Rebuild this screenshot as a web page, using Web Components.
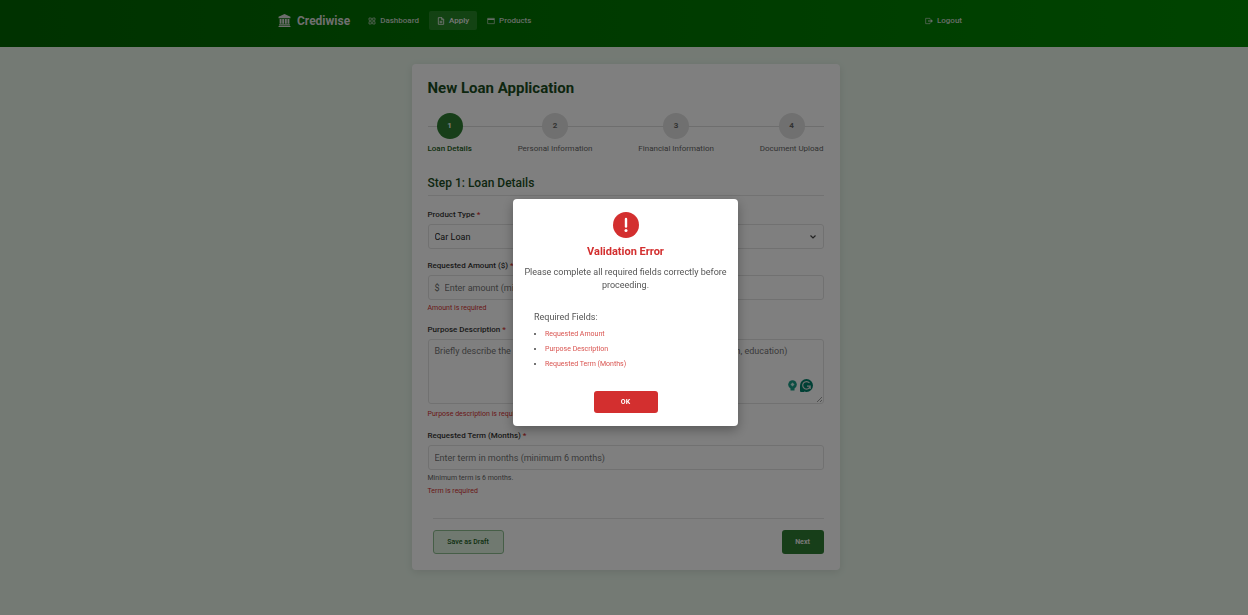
<!DOCTYPE html>
<html lang="en">
<head>
<meta charset="utf-8">
<title>Crediwise - New Loan Application</title>
<style>
html, body { margin: 0; min-height: 100%; }
body { font: 8px/12px Roboto, "Liberation Sans", sans-serif; color: #333; background: #e8f5e9; }
</style>
</head>
<body>
<loan-page></loan-page>
<error-dialog heading="Validation Error">
  <span slot="message">Please complete all required fields correctly before proceeding.</span>
  <li>Requested Amount</li>
  <li>Purpose Description</li>
  <li>Requested Term (Months)</li>
</error-dialog>
<script>
const define = (name, html) => customElements.define(name, class extends HTMLElement {
  constructor() {
    super();
    this.attachShadow({ mode: 'open' }).innerHTML =
      html.replace(/\{\{([\w-]+)\}\}/g, (_, key) => this.getAttribute(key) ?? '');
  }
});

const icons = {
  bank: '<path fill="currentColor" d="M12 0 1 5v3h22V5zM3 9h3.500v9H3zm4.800 0h3.500v9H7.800zm4.900 0h3.500v9h-3.500zm4.800 0H21v9h-3.500zM2 19h20v2H2zM1 22h22v2H1z"/>',
  grid: '<g fill="none" stroke="currentColor" stroke-width="2"><path d="M3 3h7v7H3zM14 3h7v7h-7zM3 14h7v7H3zM14 14h7v7h-7z"/></g>',
  file: '<g fill="none" stroke="currentColor" stroke-width="2.500"><path d="M4 2h11l5 5v15H4zM14 2v6h6M8 13h8M8 17h8"/></g>',
  card: '<g fill="none" stroke="currentColor" stroke-width="2"><path d="M2 4h20v16H2z"/><path stroke-width="4" d="M2 7h20"/></g>',
  logout: '<g fill="none" stroke="currentColor" stroke-width="2"><path d="M15 7V4H2v16h13v-3"/></g><path fill="currentColor" d="M9 10.500h8V6l7 6-7 6v-4.500H9z"/>'
};

customElements.define('ui-icon', class extends HTMLElement {
  constructor() {
    super();
    this.attachShadow({ mode: 'open' }).innerHTML = `
      <style>:host{display:inline-flex;width:var(--size,8px);height:var(--size,8px);flex:none}svg{width:100%;height:100%}</style>
      <svg viewBox="0 0 24 24" aria-hidden="true">${icons[this.getAttribute('name')]}</svg>`;
  }
});

customElements.define('nav-link', class extends HTMLElement {
  constructor() {
    super();
    this.attachShadow({ mode: 'open' }).innerHTML = `
      <style>
        :host{display:block}
        a{display:flex;align-items:center;gap:4px;height:19px;padding:0 8px;border-radius:2px;color:#cfdacf;font-weight:500;text-decoration:none}
        :host([active]) a{background:rgba(255,255,255,.15);color:#eee}
      </style>
      <a href="#"><ui-icon name="${this.getAttribute('icon')}"></ui-icon><slot></slot></a>`;
  }
});

define('site-header', `
  <style>
    :host{display:block;background:linear-gradient(90deg,#006400,#008800);padding-left:3px}
    .bar{display:flex;align-items:center;max-width:695px;height:47px;padding-bottom:6px;box-sizing:border-box;margin:0 auto}
    .brand{display:flex;align-items:center;gap:6px;font-size:12px;font-weight:700;color:#ddd;text-decoration:none;--size:13px;margin-right:10px}
    nav{display:flex;flex:1;gap:2px}
    .end{margin-left:auto;margin-right:3px}
  </style>
  <header class="bar">
    <a class="brand" href="#"><ui-icon name="bank"></ui-icon>Crediwise</a>
    <nav>
      <nav-link icon="grid">Dashboard</nav-link>
      <nav-link icon="file" active>Apply</nav-link>
      <nav-link icon="card">Products</nav-link>
      <nav-link class="end" icon="logout">Logout</nav-link>
    </nav>
  </header>`);

define('step-item', `
  <style>
    :host{display:flex;flex-direction:column;align-items:center;gap:4px;position:relative;color:#666}
    b{display:grid;place-items:center;width:26px;height:26px;border-radius:50%;background:#e0e0e0;color:#666}
    :host([active]){color:#1b5e20;font-weight:500}
    :host([active]) b{background:#2e7d32;color:#fff}
  </style>
  <b>{{number}}</b><slot></slot>`);

define('step-bar', `
  <style>
    :host{display:flex;justify-content:space-between;position:relative}
    :host::before{content:"";position:absolute;left:0;right:0;top:13px;height:1px;background:#dcdcdc}
  </style><slot></slot>`);

customElements.define('form-field', class extends HTMLElement {
  constructor() {
    super();
    const a = n => this.getAttribute(n) ?? '';
    const kind = a('kind');
    const control = kind === 'select'
      ? `<select id="c"><option>${a('value')}</option></select><svg class="chevron" viewBox="0 0 8 8"><path d="M1.500 2.500 4 5l2.500-2.500" fill="none" stroke="#444" stroke-width="1.200"/></svg>`
      : kind === 'textarea'
      ? `<textarea id="c" placeholder="${a('placeholder')}"></textarea><slot name="tools"></slot>`
      : `${a('prefix') && `<span>${a('prefix')}</span>`}<input id="c" placeholder="${a('placeholder')}">`;
    this.attachShadow({ mode: 'open' }).innerHTML = `
      <style>
        :host{display:block}
        label{display:block;margin-bottom:3px;font-weight:500;color:#333}
        i{font-style:normal;color:#d32f2f}
        .box{position:relative;box-sizing:border-box;border:1px solid #e2e2e2;border-radius:3px;font-size:9px}
        .row{display:flex;align-items:center;gap:5px;height:25px;padding:0 6px}
        .row.area{display:block;height:65px;margin-bottom:5px;padding:0}
        span{color:#666}
        input,select,textarea{box-sizing:border-box;width:100%;min-width:0;margin:0;padding:0;border:0;outline:0;background:none;color:#222;font:inherit;appearance:none}
        textarea{display:block;height:63px;padding:5px 6px;resize:none}
        ::placeholder{color:#757575;opacity:1}
        .chevron{width:8px;height:8px;flex:none}
        p{margin:3px 0 0;font-size:7px;line-height:10px;color:#d32f2f}
        .help{color:#666}
      </style>
      <label for="c">${a('label')} <i>*</i></label>
      <div class="box row ${kind === 'textarea' ? 'area' : ''}">${control}</div>
      ${a('help') && `<p class="help">${a('help')}</p>`}
      ${a('error') && `<p>${a('error')}</p>`}`;
  }
});

define('writing-tools', `
  <style>
    :host{position:absolute;right:9px;bottom:10px;display:flex;align-items:center;gap:1px;padding:1px;border-radius:8px}
    svg{width:13px;height:13px}
    .grip{position:absolute;right:-9px;bottom:-10px;width:7px;height:7px}
  </style>
  <svg viewBox="0 0 13 13"><circle cx="6.500" cy="5.500" r="4.300" fill="#1a9c86"/><path d="M4.500 9h4v2.500h-4z" fill="#1a9c86"/><path d="m6.500 3.500 2 2-2 2-2-2z" fill="#c8eee6"/></svg>
  <svg viewBox="0 0 13 13"><circle cx="6.500" cy="6.500" r="6.500" fill="#00806a"/><path d="M0 7h4v6H1Q0 13 0 12z" fill="#00806a"/><path d="M9.500 4A3.800 3.800 0 1 0 10.200 7.200H7M10.200 7v3" fill="none" stroke="#ddd" stroke-width="1.200"/></svg>
  <svg class="grip" viewBox="0 0 7 7"><path d="M1 6 6 1M4 6l2-2" stroke="#888" stroke-width=".8"/></svg>`);

define('action-button', `
  <style>
    :host{display:block}
    button{height:24px;min-width:42px;padding:0 12px;border:0;border-radius:3px;background:#2e7d32;color:#eee;font:inherit;font-size:7px;font-weight:700}
    :host([kind=draft]) button{min-width:71px;border:1px solid #8cbc8f;background:#e0f2e1;color:#1b5e20;font-weight:500}
    :host([kind=danger]) button{height:22px;min-width:64px;background:#d32f2f;color:#fff}
  </style>
  <button type="button"><slot></slot></button>`);

define('loan-page', `
  <style>
    :host{display:block}
    main{padding:17px 16px 45px 19px}
    .card{box-sizing:border-box;max-width:428px;margin:0 auto;padding:16px;border-radius:4px;background:#fff;box-shadow:0 2px 8px rgba(0,0,0,.1)}
    h1{margin:0 0 17px;font-size:15px;line-height:16px;font-weight:700;color:#1b4d1e}
    h2{margin:20px 0 13px;padding-bottom:4px;border-bottom:1px solid #e4e4e4;font-size:12px;line-height:16px;font-weight:500;color:#1b4d1e}
    form{display:grid;gap:11px}
    .actions{display:flex;justify-content:space-between;margin:11px 0 0 5px;padding-top:11px;border-top:1px solid #e4e4e4}
  </style>
  <site-header></site-header>
  <main><section class="card">
    <h1>New Loan Application</h1>
    <step-bar>
      <step-item number="1" active>Loan Details</step-item>
      <step-item number="2">Personal Information</step-item>
      <step-item number="3">Financial Information</step-item>
      <step-item number="4">Document Upload</step-item>
    </step-bar>
    <h2>Step 1: Loan Details</h2>
    <form>
      <form-field kind="select" label="Product Type" value="Car Loan"></form-field>
      <form-field label="Requested Amount ($)" prefix="$" placeholder="Enter amount (minimum $1,000)" error="Amount is required"></form-field>
      <form-field kind="textarea" label="Purpose Description" placeholder="Briefly describe the purpose of your loan (e.g., home renovation, car, vacation, education)" error="Purpose description is required"><writing-tools slot="tools"></writing-tools></form-field>
      <form-field label="Requested Term (Months)" placeholder="Enter term in months (minimum 6 months)" help="Minimum term is 6 months." error="Term is required"></form-field>
      <div class="actions">
        <action-button kind="draft">Save as Draft</action-button>
        <action-button>Next</action-button>
      </div>
    </form>
  </section></main>`);

define('error-dialog', `
  <style>
    :host{position:fixed;inset:0;display:grid;place-items:center;padding:10px 0 0 3px;background:rgba(0,0,0,.5)}
    section{box-sizing:border-box;width:225px;padding:13px 10px;border-radius:4px;background:#fff;box-shadow:0 4px 12px rgba(0,0,0,.3);display:flex;flex-direction:column;align-items:center;text-align:center}
    svg{width:26px;height:26px}
    h2{margin:8px 0 8px;font-size:11px;line-height:12px;font-weight:700;color:#d32f2f}
    p{margin:0;font-size:9px;line-height:13px;color:#555}
    .fields{align-self:stretch;margin:19px 0 19px;padding-left:11px;text-align:left;font-size:9px;color:#555}
    ul{margin:4px 0 0;padding-left:11px;font-size:7px;line-height:15px}
    ::slotted(li){color:#d9534f}
    ::slotted(li)::marker{color:#444}
  </style>
  <section role="alertdialog" aria-modal="true" aria-labelledby="t">
    <svg viewBox="0 0 26 26" aria-hidden="true"><circle cx="13" cy="13" r="13" fill="#d32f2f"/><path d="M13 7v7.500" stroke="#fff" stroke-width="2.400" stroke-linecap="round"/><circle cx="13" cy="18.500" r="1.500" fill="#fff"/></svg>
    <h2 id="t">{{heading}}</h2>
    <p><slot name="message"></slot></p>
    <div class="fields">Required Fields:<ul><slot></slot></ul></div>
    <action-button kind="danger">OK</action-button>
  </section>`);
</script>
</body>
</html>
